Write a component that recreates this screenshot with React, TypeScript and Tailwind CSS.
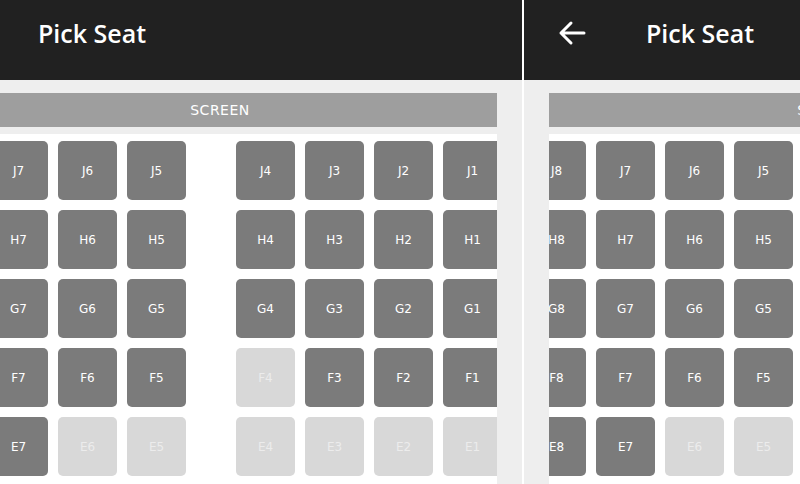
import React from "react";

type Seat = { id: string; free: boolean };

const rows = ["J", "H", "G", "F", "E", "D"];
const taken = new Set(["F4", "E6", "E5", "E4", "E3", "E2", "E1"]);

function seatsFor(row: string, nums: number[]): Seat[] {
  return nums.map((n) => ({ id: `${row}${n}`, free: !taken.has(`${row}${n}`) }));
}

function SeatBox({ seat }: { seat: Seat }) {
  return (
    <div
      className={`flex h-[59px] w-[59px] shrink-0 items-center justify-center rounded-[5px] text-[12px] ${
        seat.free ? "bg-[#7b7b7b] text-white" : "bg-[#d8d8d8] text-[#ececec]"
      }`}
      style={{ fontFamily: '"DejaVu Sans", sans-serif' }}
    >
      {seat.id}
    </div>
  );
}

function SeatMap({ offset }: { offset: string }) {
  return (
    <div className={`flex w-[619px] shrink-0 flex-col ${offset}`}>
      <div className="flex h-[34px] shrink-0 items-center justify-center bg-[#9e9e9e] pl-[1px]">
        <span className="text-[14px] tracking-[0.5px] text-white" style={{ fontFamily: '"DejaVu Sans", sans-serif' }}>
          SCREEN
        </span>
      </div>
      <div className="h-[7px] shrink-0 bg-[#eeeeee]" />
      <div className="flex shrink-0 flex-col gap-[10px] bg-white pl-[10px] pt-[7px]">
        {rows.map((row) => (
          <div key={row} className="flex gap-[10px]">
            {seatsFor(row, [8, 7, 6, 5]).map((s) => (
              <SeatBox key={s.id} seat={s} />
            ))}
            <div className="w-[30px] shrink-0" />
            {seatsFor(row, [4, 3, 2, 1]).map((s) => (
              <SeatBox key={s.id} seat={s} />
            ))}
          </div>
        ))}
      </div>
    </div>
  );
}

function Title() {
  return (
    <span className="text-[25px] font-semibold text-white" style={{ fontFamily: '"Open Sans", sans-serif' }}>
      Pick Seat
    </span>
  );
}

export default function App() {
  return (
    <div className="flex h-[484px] w-[800px] overflow-hidden bg-white">
      <div className="flex w-[522px] shrink-0 flex-col">
        <div className="flex h-[80px] shrink-0 items-center bg-[#212121] pb-[13px] pl-[38px]">
          <Title />
        </div>
        <div className="flex min-h-0 flex-1 bg-[#eeeeee] pr-[25px] pt-[13px]">
          <div className="flex flex-1 overflow-hidden bg-white">
            <SeatMap offset="ml-[-90px]" />
          </div>
        </div>
      </div>
      <div className="w-[2px] shrink-0 bg-white" />
      <div className="flex min-w-0 flex-1 flex-col">
        <div className="flex h-[80px] shrink-0 items-center bg-[#212121] pb-[15px] pl-[34px]">
          <svg width="28" height="26" viewBox="0 0 28 26" fill="none" stroke="white" strokeWidth="3" strokeLinecap="round" strokeLinejoin="round">
            <path d="M26 13H3M13 3L3 13l10 10" />
          </svg>
          <div className="ml-[60px] mt-[2px]">
            <Title />
          </div>
        </div>
        <div className="flex min-h-0 flex-1 bg-[#eeeeee] pl-[25px] pt-[13px]">
          <div className="flex flex-1 overflow-hidden bg-white">
            <SeatMap offset="ml-[-32px]" />
          </div>
        </div>
      </div>
    </div>
  );
}
